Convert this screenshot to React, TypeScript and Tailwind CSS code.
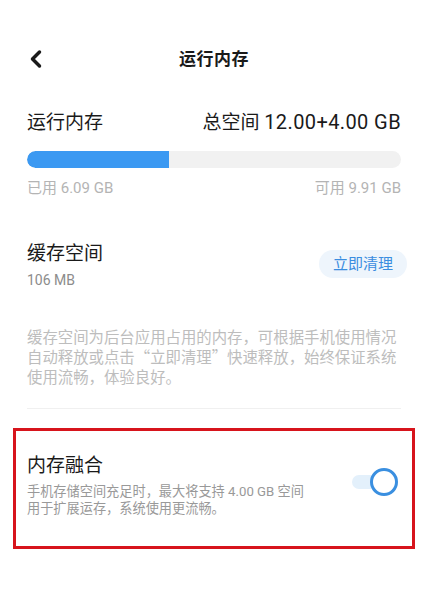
import { ChevronLeft } from "lucide-react";

const cjk = { fontFamily: '"Noto Sans CJK SC", "Noto Sans", sans-serif' };
const mixed = { fontFamily: 'Roboto, "Noto Sans CJK SC", sans-serif' };

const App = () => {
  return (
    <div className="w-[428px] h-[611px] bg-white overflow-hidden text-[#1a1a1a]" style={mixed}>
      {/* header */}
      <div className="relative flex items-center justify-center h-[56px] mt-[30px]">
        <ChevronLeft className="absolute left-[22px] top-[15px]" size={28} strokeWidth={3} />
        <h1 className="text-[17px] font-bold tracking-[0.5px]" style={cjk}>运行内存</h1>
      </div>

      {/* memory usage */}
      <div className="px-[27px] pt-[22px]">
        <div className="flex items-center justify-between text-[19px] leading-[28px]">
          <span>运行内存</span>
          <span>
            总空间 <span className="text-[20px] tracking-[0.4px]">12.00+4.00 GB</span>
          </span>
        </div>
        <div className="mt-[14px] h-[17px] w-full rounded-full bg-[#f1f1f1] overflow-hidden">
          <div className="h-full w-[38%] rounded-l-full bg-[#3b99f2]" />
        </div>
        <div className="mt-[10px] flex justify-between text-[15px] leading-[20px] text-[#b4b4b4]">
          <span>已用 6.09 GB</span>
          <span>可用 9.91 GB</span>
        </div>
      </div>

      {/* cache */}
      <div className="px-[27px] mt-[42px] flex items-start justify-between">
        <div>
          <div className="text-[19px] leading-[28px]">缓存空间</div>
          <div className="text-[14px] leading-[20px] text-[#8c8c8c] mt-[2px]">106 MB</div>
        </div>
        <button className="mt-[10px] mr-[-6px] h-[28px] px-[14px] rounded-full bg-[#eef5fc] text-[#3a8de0] text-[15px]">
          立即清理
        </button>
      </div>

      <p className="px-[27px] mt-[36px] text-[15.4px] leading-[20px] text-[#bdbdbd]" style={cjk}>
        缓存空间为后台应用占用的内存，可根据手机使用情况<br />
        自动释放或点击“立即清理”快速释放，始终保证系统<br />
        使用流畅，体验良好。
      </p>

      <div className="mx-[27px] mt-[22px] h-px bg-[#f0f0f0]" />

      {/* memory fusion, highlighted */}
      <div className="mx-[13px] mt-[19px] h-[121px] border-[3px] border-[#d7141c] pl-[11px] pr-[14px] pt-[21px] flex items-start justify-between">
        <div>
          <div className="text-[19px] leading-[28px]">内存融合</div>
          <div className="mt-[3px] text-[13.2px] leading-[17px] text-[#999999]">
            手机存储空间充足时，最大将支持 4.00 GB 空间<br />
            用于扩展运存，系统使用更流畅。
          </div>
        </div>
        <div className="relative mt-[16px] w-[46px] h-[28px]">
          <div className="absolute left-0 top-[7px] w-[32px] h-[14px] rounded-full bg-[#e3f0fb]" />
          <div className="absolute right-0 top-0 w-[28px] h-[28px] rounded-full bg-white border-[3px] border-[#3a8fe0]" />
        </div>
      </div>
    </div>
  );
};

export default App;
